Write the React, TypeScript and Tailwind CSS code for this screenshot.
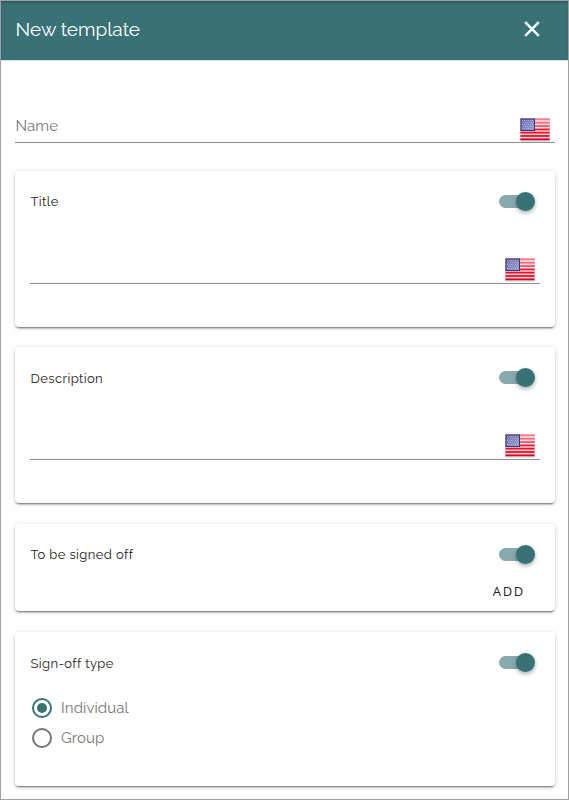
import React from "react";

function Flag() {
  const stripes = Array.from({ length: 7 }, (_, i) => i);
  const stars = Array.from({ length: 30 }, (_, i) => i);
  return (
    <svg width="30" height="24" viewBox="0 0 30 24" className="block">
      <defs>
        <linearGradient id="gloss" x1="0" y1="0" x2="0" y2="1">
          <stop offset="0" stopColor="#fff" stopOpacity="0.5" />
          <stop offset="1" stopColor="#fff" stopOpacity="0.22" />
        </linearGradient>
        <linearGradient id="canton" x1="0" y1="0" x2="1" y2="1">
          <stop offset="0" stopColor="#6a6fb0" />
          <stop offset="1" stopColor="#9a9dca" />
        </linearGradient>
      </defs>
      <rect x="0" y="1" width="30" height="22.4" rx="0.8" fill="#8b8b8b" opacity="0.5" />
      <rect x="0.5" y="0.5" width="29" height="21.5" fill="#f9d0d6" />
      {stripes.map((i) => (
        <rect key={i} x="0.5" y={0.5 + i * 3.31} width="29" height="1.8" fill="#e4152c" />
      ))}
      <rect x="0.5" y="0.5" width="29" height="10.5" fill="url(#gloss)" />
      <rect x="0.5" y="0.5" width="14.5" height="12.5" fill="#32358c" />
      <rect x="1.5" y="1.5" width="12.5" height="10.5" fill="url(#canton)" />
      {stars.map((i) => (
        <rect key={i} x={2 + (i % 6) * 2 + (Math.floor(i / 6) % 2)} y={2 + Math.floor(i / 6) * 2} width="1" height="1" fill="#a9acd6" />
      ))}
      <rect x="0.5" y="21" width="29" height="1" fill="#b90a28" opacity="0.6" />
    </svg>
  );
}

function Toggle() {
  return (
    <div className="flex h-5 w-9 items-center">
      <div className="mb-px h-[13px] w-8 rounded-full bg-[#88aaac]" />
      <div className="-ml-[15px] size-[19px] shrink-0 rounded-full bg-[#387276] shadow-[0_2px_4px_rgba(0,0,0,0.35)]" />
    </div>
  );
}

function Card({ title, titleClass, className, children }: { title: string; titleClass: string; className: string; children?: React.ReactNode }) {
  return (
    <section className={"flex flex-col rounded bg-white px-[15px] shadow-[0_2px_2px_-1px_rgba(0,0,0,0.5),0_1px_4px_rgba(0,0,0,0.2)] " + className}>
      <div className="flex h-[61px] items-center justify-between pr-[5px]">
        <h2 className={"whitespace-nowrap pl-[0.5px] text-[13px] tracking-[0.4px] text-[#222] " + titleClass}>{title}</h2>
        <Toggle />
      </div>
      {children}
    </section>
  );
}

function FlagInput() {
  return (
    <div className="flex h-[52px] items-end justify-end border-b border-[#8c8c8c] pr-[5.5px] pb-px">
      <Flag />
    </div>
  );
}

function Radio({ label, checked }: { label: string; checked?: boolean }) {
  return (
    <div className="flex h-[30px] items-center gap-[9px] pl-[2px]">
      <div className={"flex size-5 items-center justify-center rounded-full border-2 " + (checked ? "border-[#387276]" : "border-[#757575]")}>
        {checked && <div className="size-[10px] rounded-full bg-[#387276]" />}
      </div>
      <span className="pt-px text-[15px] tracking-[0.08px] text-[#777]">{label}</span>
    </div>
  );
}

export default function App() {
  return (
    <div className="h-[800px] w-[569px] overflow-hidden border border-[#a0a0a0] bg-white font-['Raleway','Lato',sans-serif]">
      <header className="flex h-[59px] items-center justify-between bg-[#387276] pr-[28px] pl-[14.5px] shadow-[0_1px_0_#dedede,inset_0_2px_2px_rgba(0,0,0,0.18)]">
        <h1 className="pb-[2px] text-[19px] text-white">New template</h1>
        <svg width="16" height="16" viewBox="0 0 16 16" stroke="#fff" strokeWidth="2.4" className="-mt-1">
          <path d="M1.2 1.2 14.8 14.8M14.8 1.2 1.2 14.8" />
        </svg>
      </header>
      <main className="flex flex-col pt-[51px] pr-[13px] pl-[14px]">
        <div className="flex h-8 items-end justify-between border-b border-[#8c8c8c] pr-[5px]">
          <span className="pb-[5px] pl-[0.5px] text-[15px] tracking-[0.08px] text-[#777]">Name</span>
          <Flag />
        </div>
        <Card title="Title" titleClass="" className="mt-7 h-[156px]">
          <FlagInput />
        </Card>
        <Card title="Description" titleClass="pt-[2px]" className="mt-5 h-[156px]">
          <FlagInput />
        </Card>
        <Card title="To be signed off" titleClass="" className="mt-[21px] h-[87px]">
          <button className="-mt-1 mr-[15px] self-end font-['Open_Sans',sans-serif] text-[13px] leading-[20px] tracking-[1.7px] text-[#222]">ADD</button>
        </Card>
        <Card title="Sign-off type" titleClass="pt-[2px]" className="mt-[21px] h-[154px]">
          <div className="-mt-[0.5px] flex flex-col">
            <Radio label="Individual" checked />
            <Radio label="Group" />
          </div>
        </Card>
      </main>
    </div>
  );
}
